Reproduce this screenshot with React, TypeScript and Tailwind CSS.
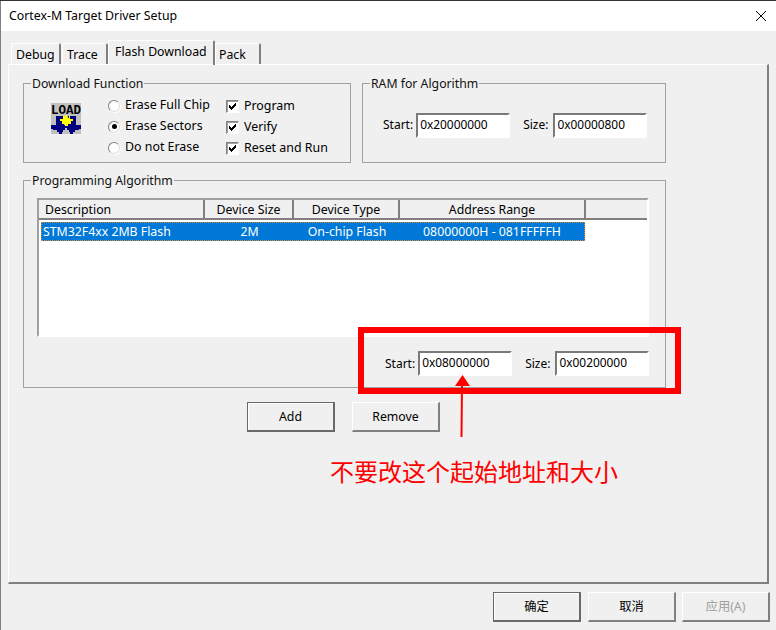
import React from 'react';

const sans = "font-['Noto_Sans','Noto_Sans_CJK_SC',sans-serif]";

function Group({ title, className, children }: { title: string; className: string; children: React.ReactNode }) {
  return (
    <div className={`relative border border-[#a0a0a0] ${className}`}>
      <span className="absolute left-[7px] top-[-9px] bg-[#f0f0f0] px-[1px] text-[12.25px] leading-[18px] text-[#101010]">{title}</span>
      {children}
    </div>
  );
}

function Radio({ label, checked }: { label: string; checked?: boolean }) {
  return (
    <div className="flex h-[21px] items-center">
      <span className="flex h-[12px] w-[12px] items-center justify-center rounded-full border border-[#808080] border-b-[#dddddd] border-r-[#dddddd] bg-white shadow-[1px_1px_0_#fff]">
        {checked && <span className="h-[5px] w-[5px] rounded-full bg-black" />}
      </span>
      <span className="ml-[5px] text-[12.4px]">{label}</span>
    </div>
  );
}

function Check({ label }: { label: string }) {
  return (
    <div className="flex h-[21px] items-center">
      <span className="flex h-[13px] w-[13px] items-center justify-center border border-[#808080] border-b-white border-r-white bg-white shadow-[inset_1px_1px_0_#a0a0a0]">
        <svg width="9" height="9" viewBox="0 0 9 9" shapeRendering="crispEdges">
          <path d="M1 3h1v1h1v1h1V4h1V3h1V2h1V1h1v3H7v1H6v1H5v1H4v1H3V7H2V6H1z" fill="#000" />
        </svg>
      </span>
      <span className="ml-[5px] text-[12.4px]">{label}</span>
    </div>
  );
}

function Field({ label, value, gap }: { label: string; value: string; gap: string }) {
  return (
    <div className={`flex items-center ${gap}`}>
      <span className="text-[12px]">{label}</span>
      <div className="h-[25px] w-[94px] border-2 border-b-white border-l-[#7a7a7a] border-r-white border-t-[#7a7a7a] bg-white pl-[2px] text-[11.9px] leading-[19px]">
        {value}
      </div>
    </div>
  );
}

function Tab({ label, className }: { label: string; className: string }) {
  return (
    <div className={`rounded-t-[2px] border-l border-r-2 border-t border-l-white border-r-[#808080] border-t-white text-[12.3px] ${className}`}>
      {label}
    </div>
  );
}

function Btn({ label, primary, disabled, className }: { label: string; primary?: boolean; disabled?: boolean; className?: string }) {
  return (
    <div
      className={`flex h-[30px] w-[88px] items-center justify-center pt-[1px] text-[12.3px] ${
        primary
          ? 'border border-b-2 border-r-2 border-[#696969] shadow-[inset_1px_1px_0_#fff]'
          : 'border border-b-2 border-r-2 border-b-[#808080] border-l-white border-r-[#808080] border-t-white'
      } ${disabled ? 'text-[#a0a0a0]' : 'text-black'} ${className ?? ''}`}
    >
      {label}
    </div>
  );
}

function HeadCell({ label, className }: { label: string; className: string }) {
  return (
    <div className={`flex h-full items-center border-r-2 border-r-[#808080] pt-[2px] text-[12.3px] ${className}`}>{label}</div>
  );
}

function LoadIcon() {
  return (
    <svg width="30" height="31" viewBox="0 0 30 31" className="shrink-0">
      <rect x="0" y="0" width="30" height="31" fill="#c0c0c0" />
      <text x="0" y="11" fontFamily="'Liberation Mono', monospace" fontWeight="bold" fontSize="13" textLength="30" lengthAdjust="spacingAndGlyphs" fill="#000">
        LOAD
      </text>
      <g shapeRendering="crispEdges">
        <path d="M5 13h8v9h2v3h-1v2h-2v2h-1v2H8v-2H6v-2H2v-1H0v-4h5z" fill="#000080" />
        <path d="M17 13h8v9h5v4h-2v1h-4v2h-2v2h-3v-2h-1v-2h-2v-2h-1v-3h2z" fill="#000080" />
        <path d="M14 12h2v3h2v-2h1v3h3v2h-2v3h-3v2h-3v-2h-3v-3H9v-2h3v-3h2z" fill="#ffff00" />
      </g>
    </svg>
  );
}

export default function App() {
  return (
    <div className={`relative flex h-[630px] w-[776px] flex-col overflow-hidden bg-[#f0f0f0] text-black shadow-[inset_1px_0_0_#808080] ${sans}`}>
      <div className="h-[1px] bg-[#333333]" />
      {/* title bar */}
      <div className="flex h-[30px] items-center justify-between bg-white pl-[9px] pr-[10px] shadow-[inset_1px_0_0_#808080]">
        <span className="text-[12.3px]">Cortex-M Target Driver Setup</span>
        <svg width="10" height="10" viewBox="0 0 10 10">
          <path d="M0 0L10 10M10 0L0 10" stroke="#000" strokeWidth="1" />
        </svg>
      </div>

      {/* tabs */}
      <div className="flex h-[33px] items-end pl-[11px]">
        <Tab label="Debug" className="flex h-[21px] w-[50px] items-center pl-[4px] pt-[2px]" />
        <Tab label="Trace" className="ml-[1px] flex h-[21px] w-[46px] items-center pl-[4px] pt-[2px]" />
        <Tab label="Flash Download" className="z-10 mb-[-1px] flex h-[25px] w-[107px] items-center pb-[2px] pl-[6px]" />
        <Tab label="Pack" className="flex h-[21px] w-[46px] items-center pl-[3px] pt-[2px]" />
      </div>

      {/* panel */}
      <div className="ml-[8px] h-[520px] w-[761px] border-b-2 border-l border-r-2 border-t border-b-[#808080] border-l-white border-r-[#808080] border-t-white pl-[14px] pt-[18px]">
        <div className="flex gap-[11px]">
          <Group title="Download Function" className="flex h-[80px] w-[328px] pl-[27px] pt-[11px]">
            <div className="pt-[8px]">
              <LoadIcon />
            </div>
            <div className="ml-[27px] flex w-[118px] flex-col">
              <Radio label="Erase Full Chip" />
              <Radio label="Erase Sectors" checked />
              <Radio label="Do not Erase" />
            </div>
            <div className="mt-[1px] flex flex-col">
              <Check label="Program" />
              <Check label="Verify" />
              <Check label="Reset and Run" />
            </div>
          </Group>
          <Group title="RAM for Algorithm" className="flex h-[80px] w-[304px] items-center pl-[20px] pt-[4px]">
            <Field label="Start:" value="0x20000000" gap="gap-[3px]" />
            <div className="ml-[13px]">
              <Field label="Size:" value="0x00000800" gap="gap-[5px]" />
            </div>
          </Group>
        </div>

        <Group title="Programming Algorithm" className="mt-[17px] h-[208px] w-[643px] pl-[13px] pt-[17px]">
          {/* list */}
          <div className="h-[139px] w-[612px] border-2 border-b-white border-l-[#a0a0a0] border-r-white border-t-[#a0a0a0] bg-white">
            <div className="flex h-[20px] border-b-2 border-b-[#808080] bg-[#f0f0f0]">
              <HeadCell label="Description" className="w-[166px] pl-[6px]" />
              <HeadCell label="Device Size" className="w-[89px] justify-center" />
              <HeadCell label="Device Type" className="w-[106px] justify-center" />
              <HeadCell label="Address Range" className="w-[186px] justify-center" />
            </div>
            <div className="ml-[2px] mt-[2px] flex h-[19px] w-[544px] items-center border border-dotted border-[#e08a20] bg-[#0078d7] pt-[1px] text-[12.3px] text-white">
              <span className="w-[163px] pl-[1px]">STM32F4xx 2MB Flash</span>
              <span className="w-[89px] text-center">2M</span>
              <span className="w-[106px] text-center">On-chip Flash</span>
              <span className="w-[184px] text-center">08000000H - 081FFFFFH</span>
            </div>
          </div>
          <div className="ml-[348px] mt-[14px] flex">
            <Field label="Start:" value="0x08000000" gap="gap-[3px]" />
            <div className="ml-[13px]">
              <Field label="Size:" value="0x00200000" gap="gap-[5px]" />
            </div>
          </div>
        </Group>

        <div className="ml-[224px] mt-[14px] flex gap-[17px]">
          <Btn label="Add" primary />
          <Btn label="Remove" />
        </div>
      </div>

      {/* dialog buttons */}
      <div className="ml-[493px] mt-[8px] flex gap-[7px]">
        <Btn label="确定" primary />
        <Btn label="取消" />
        <Btn label="应用(A)" disabled className="ml-[-1px]" />
      </div>

      {/* red annotation on top of the screenshot */}
      <div className="absolute left-[358px] top-[327px] h-[67px] w-[323px] border-[6px] border-[#ff0000]" />
      <svg className="absolute left-[450px] top-[370px]" width="26" height="70" viewBox="0 0 26 70">
        <path d="M12.5 5L20 16H5z" fill="#ff0000" />
        <path d="M12 14L11.5 67" stroke="#ff0000" strokeWidth="2" fill="none" />
      </svg>
      <span className="absolute left-[330px] top-[456px] text-[24px] leading-[32px] text-[#ff0000]">不要改这个起始地址和大小</span>
    </div>
  );
}
